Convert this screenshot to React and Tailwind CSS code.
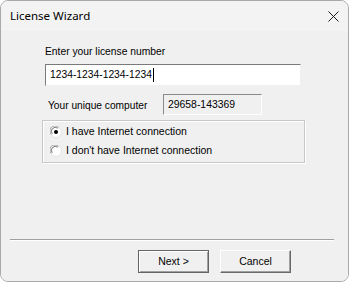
import React from "react";

function Radio({ checked }) {
  return (
    <svg width="12" height="12" viewBox="0 0 12 12" className="shrink-0">
      <circle cx="6" cy="6" r="5.5" fill="#ffffff" stroke="#e3e3e3" />
      <path d="M1.3 8.5 A5 5 0 0 1 8.5 1.3" fill="none" stroke="#a8a8a8" strokeWidth="1" />
      <path d="M2.2 7.8 A4 4 0 0 1 7.8 2.2" fill="none" stroke="#777777" strokeWidth="1" />
      {checked && <circle cx="6" cy="6" r="2" fill="#000000" />}
    </svg>
  );
}

export default function App() {
  const sans = { fontFamily: '"Liberation Sans", Arial, sans-serif' };
  return (
    <div className="w-[349px] h-[283px] bg-white">
      <div className="w-[349px] h-[282px] border border-[#a9a9a9] rounded-[8px] overflow-hidden flex flex-col bg-[#f0f0f0]">
        <div
          className="h-[30px] shrink-0 bg-[#f3f3f3] flex items-center justify-between pl-[9px] pr-[9px]"
          style={{ fontFamily: '"Noto Sans", "Open Sans", sans-serif' }}
        >
          <span className="text-[11.5px] text-black leading-none">License Wizard</span>
          <svg width="11" height="11" viewBox="0 0 11 11">
            <path d="M0.5 0.5 L10.5 10.5 M10.5 0.5 L0.5 10.5" stroke="#1a1a1a" strokeWidth="1" />
          </svg>
        </div>
        <div className="flex-1 flex flex-col bg-[#f0f0f0] text-black" style={sans}>
          <div className="pl-[44px] pt-[14px] text-[10.3px] leading-[14px]">
            Enter your license number
          </div>
          <div className="ml-[44px] mt-[5px] w-[256px] h-[22px] bg-white border-t-[1.5px] border-l-[1.5px] border-t-[#7a7a7a] border-l-[#7a7a7a] border-r border-b border-r-[#f0f0f0] border-b-[#f0f0f0] flex items-center pl-[4px] text-[10.3px]">
            <span>1234-1234-1234-1234</span>
            <span className="w-px h-[14px] bg-black ml-px"></span>
          </div>
          <div className="flex items-center mt-[8px] h-[21px]">
            <span className="pl-[47px] w-[162px] text-[10.2px] pt-[2px]">Your unique computer</span>
            <div className="w-[99px] h-[21px] bg-[#f0f0f0] border-t-[1.5px] border-l-[1.5px] border-t-[#8a8a8a] border-l-[#8a8a8a] border-r border-b border-r-[#ffffff] border-b-[#ffffff] flex items-center pl-[4px] text-[10.4px]">
              29658-143369
            </div>
          </div>
          <div className="ml-[41px] mt-[5px] w-[263px] h-[43px] border border-[#c8c8c8] shadow-[inset_1px_1px_0_#ffffff,1px_1px_0_#ffffff] flex flex-col justify-center gap-[6px] pl-[7px] text-[10.5px]">
            <div className="flex items-center gap-[4px] h-[13px]">
              <Radio checked />
              <span>I have Internet connection</span>
            </div>
            <div className="flex items-center gap-[4px] h-[13px]">
              <Radio />
              <span>I don't have Internet connection</span>
            </div>
          </div>
          <div className="flex-1"></div>
          <div className="ml-[9px] mr-[14px] h-px bg-[#a0a0a0] border-b border-white box-content"></div>
          <div className="flex justify-end gap-[11px] pr-[57px] pt-[9px] pb-[8px]">
            <button className="w-[71px] h-[23px] bg-[#f0f0f0] border border-[#646464] shadow-[inset_1px_1px_0_#ffffff,inset_-1px_-1px_0_#a0a0a0] text-[10.5px] text-black" style={sans}>
              Next &gt;
            </button>
            <button className="w-[71px] h-[23px] bg-[#f0f0f0] border border-t-white border-l-white border-r-[#696969] border-b-[#696969] shadow-[inset_-1px_-1px_0_#a0a0a0] text-[10.5px] text-black" style={sans}>
              Cancel
            </button>
          </div>
        </div>
      </div>
    </div>
  );
}
